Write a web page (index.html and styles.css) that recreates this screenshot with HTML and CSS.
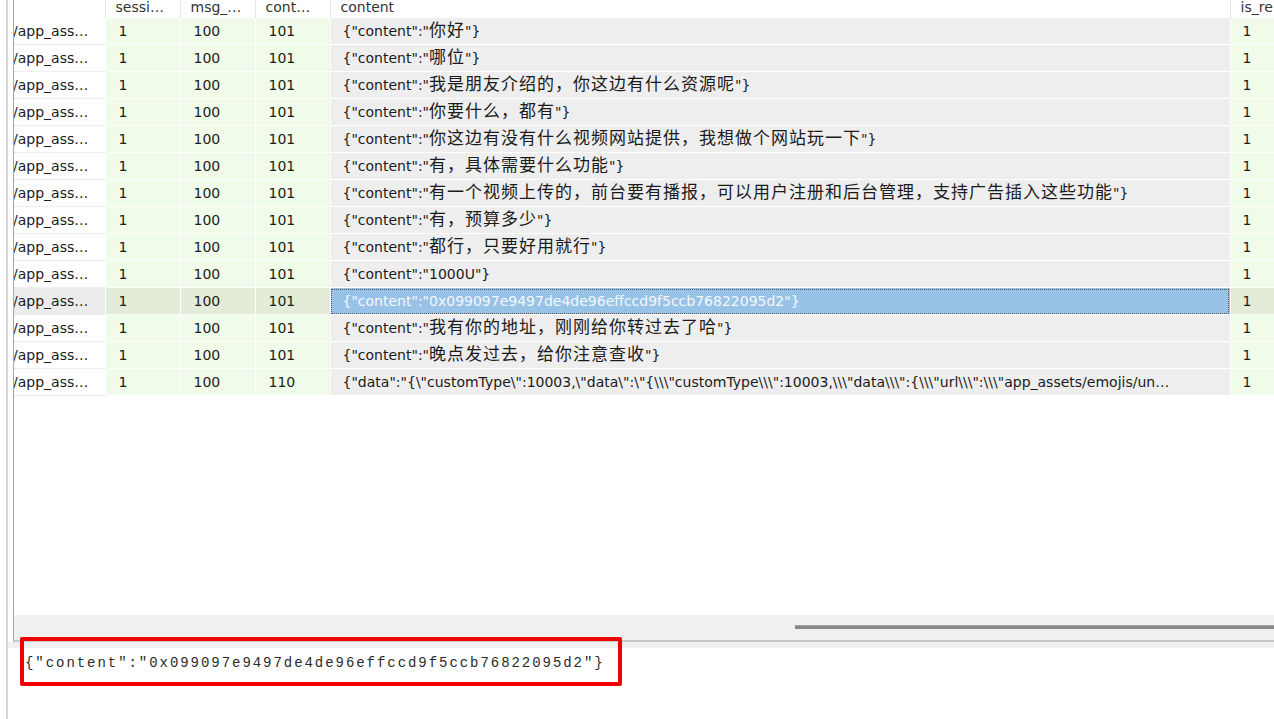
FILE: index.html
```html
<!DOCTYPE html>
<html lang="zh-CN">
<head>
  <meta charset="UTF-8">
  <meta name="viewport" content="width=device-width, initial-scale=1.0">
  <title>messages</title>
  <link rel="stylesheet" href="styles.css">
</head>
<body>
  <div class="window">
    <div class="grid-pane">
      <div class="table-wrap">
        <table class="data">
          <colgroup>
            <col class="c-path">
            <col class="c-num">
            <col class="c-num">
            <col class="c-num">
            <col class="c-content">
            <col class="c-last">
          </colgroup>
          <thead>
            <tr>
              <th></th>
              <th>sessi…</th>
              <th>msg_…</th>
              <th>cont…</th>
              <th>content</th>
              <th>is_re</th>
            </tr>
          </thead>
          <tbody>
            <tr><td>/app_ass…</td><td>1</td><td>100</td><td>101</td><td>{"content":"<span class="zh">你好</span>"}</td><td>1</td></tr>
            <tr><td>/app_ass…</td><td>1</td><td>100</td><td>101</td><td>{"content":"<span class="zh">哪位</span>"}</td><td>1</td></tr>
            <tr><td>/app_ass…</td><td>1</td><td>100</td><td>101</td><td>{"content":"<span class="zh">我是朋友介绍的，你这边有什么资源呢</span>"}</td><td>1</td></tr>
            <tr><td>/app_ass…</td><td>1</td><td>100</td><td>101</td><td>{"content":"<span class="zh">你要什么，都有</span>"}</td><td>1</td></tr>
            <tr><td>/app_ass…</td><td>1</td><td>100</td><td>101</td><td>{"content":"<span class="zh">你这边有没有什么视频网站提供，我想做个网站玩一下</span>"}</td><td>1</td></tr>
            <tr><td>/app_ass…</td><td>1</td><td>100</td><td>101</td><td>{"content":"<span class="zh">有，具体需要什么功能</span>"}</td><td>1</td></tr>
            <tr><td>/app_ass…</td><td>1</td><td>100</td><td>101</td><td>{"content":"<span class="zh">有一个视频上传的，前台要有播报，可以用户注册和后台管理，支持广告插入这些功能</span>"}</td><td>1</td></tr>
            <tr><td>/app_ass…</td><td>1</td><td>100</td><td>101</td><td>{"content":"<span class="zh">有，预算多少</span>"}</td><td>1</td></tr>
            <tr><td>/app_ass…</td><td>1</td><td>100</td><td>101</td><td>{"content":"<span class="zh">都行，只要好用就行</span>"}</td><td>1</td></tr>
            <tr><td>/app_ass…</td><td>1</td><td>100</td><td>101</td><td>{"content":"1000U"}</td><td>1</td></tr>
            <tr class="selected"><td>/app_ass…</td><td>1</td><td>100</td><td>101</td><td class="focus">{"content":"0x099097e9497de4de96effccd9f5ccb76822095d2"}</td><td>1</td></tr>
            <tr><td>/app_ass…</td><td>1</td><td>100</td><td>101</td><td>{"content":"<span class="zh">我有你的地址，刚刚给你转过去了哈</span>"}</td><td>1</td></tr>
            <tr><td>/app_ass…</td><td>1</td><td>100</td><td>101</td><td>{"content":"<span class="zh">晚点发过去，给你注意查收</span>"}</td><td>1</td></tr>
            <tr><td>/app_ass…</td><td>1</td><td>100</td><td>110</td><td>{"data":"{\"customType\":10003,\"data\":\"{\\\"customType\\\":10003,\\\"data\\\":{\\\"url\\\":\\\"app_assets/emojis/un…</td><td>1</td></tr>
          </tbody>
        </table>
      </div>
      <div class="hscroll">
        <div class="thumb"></div>
      </div>
    </div>
    <div class="value-pane">
      <div class="value-text">{"content":"0x099097e9497de4de96effccd9f5ccb76822095d2"}</div>
    </div>
    <div class="highlight"></div>
  </div>
</body>
</html>
```

FILE: styles.css
```css
html, body {
  margin: 0;
  height: 100%;
  overflow: hidden;
  background: #fff;
}

body {
  font-family: "DejaVu Sans", "Noto Sans CJK SC", sans-serif;
  font-size: 14px;
  color: #1b1b1b;
}

.window {
  position: relative;
  height: 719px;
  margin-left: 6px;
  border-left: 2px solid #d6d6d6;
  display: flex;
  flex-direction: column;
}

.grid-pane {
  height: 640px;
  margin-left: 5px;
  border-left: 1px solid #a8a8a8;
  border-bottom: 2px solid #c6c6ce;
  display: flex;
  flex-direction: column;
  overflow: hidden;
}

.table-wrap {
  flex: 1;
  overflow: hidden;
}

.data {
  border-collapse: collapse;
  table-layout: fixed;
  width: 1296px;
}

.c-path { width: 91px; }
.c-num { width: 75px; }
.c-content { width: 900px; }
.c-last { width: 80px; }

.data th {
  height: 18px;
  padding: 0 0 0 10px;
  vertical-align: top;
  line-height: 14px;
  text-align: left;
  font-weight: normal;
  color: #333;
  background: #fff;
  border-right: 1px solid #e6e6e6;
  white-space: nowrap;
}

.data td {
  height: 26px;
  padding: 0 0 0 13px;
  line-height: 26px;
  white-space: nowrap;
  overflow: hidden;
  background: #f1fbe9;
  border-bottom: 1px dotted #fff;
  border-right: 1px dotted #fff;
}

.data td:first-child {
  padding-left: 0;
  text-indent: -1px;
  background: #fff;
  border-bottom-color: #e2e2e2;
}

.data td:nth-child(5) {
  padding-left: 12px;
  background: #eeeeee;
}

.data td:last-child {
  padding-left: 12px;
}

.zh {
  font-family: "Noto Sans CJK SC", sans-serif;
  font-size: 17px;
  line-height: 1;
  letter-spacing: 1px;
}

.data tr.selected td {
  background: #e3ebd9;
}

.data tr.selected td:first-child {
  background: #ececec;
}

.data tr.selected td.focus {
  background: #99c2e7;
  color: #f4f8fc;
  outline: 1px dotted #555;
  outline-offset: -2px;
}

.hscroll {
  height: 25px;
  background: #f0f0f0;
  position: relative;
}

.thumb {
  position: absolute;
  left: 781px;
  right: -20px;
  top: 10px;
  height: 3px;
  background: #888;
  border-top: 1px solid #a4a4a4;
}

.value-pane {
  flex: 1;
  border-top: 6px solid #f0f0f0;
  padding: 7px 0 0 17px;
}

.value-text {
  font-family: "Liberation Mono", "DejaVu Sans Mono", monospace;
  font-size: 14px;
  letter-spacing: 1.95px;
  color: #2a2a2a;
  white-space: nowrap;
}

.highlight {
  position: absolute;
  left: 12px;
  top: 637px;
  width: 594px;
  height: 41px;
  border: 4px solid #f20000;
  border-radius: 2px;
}
```
